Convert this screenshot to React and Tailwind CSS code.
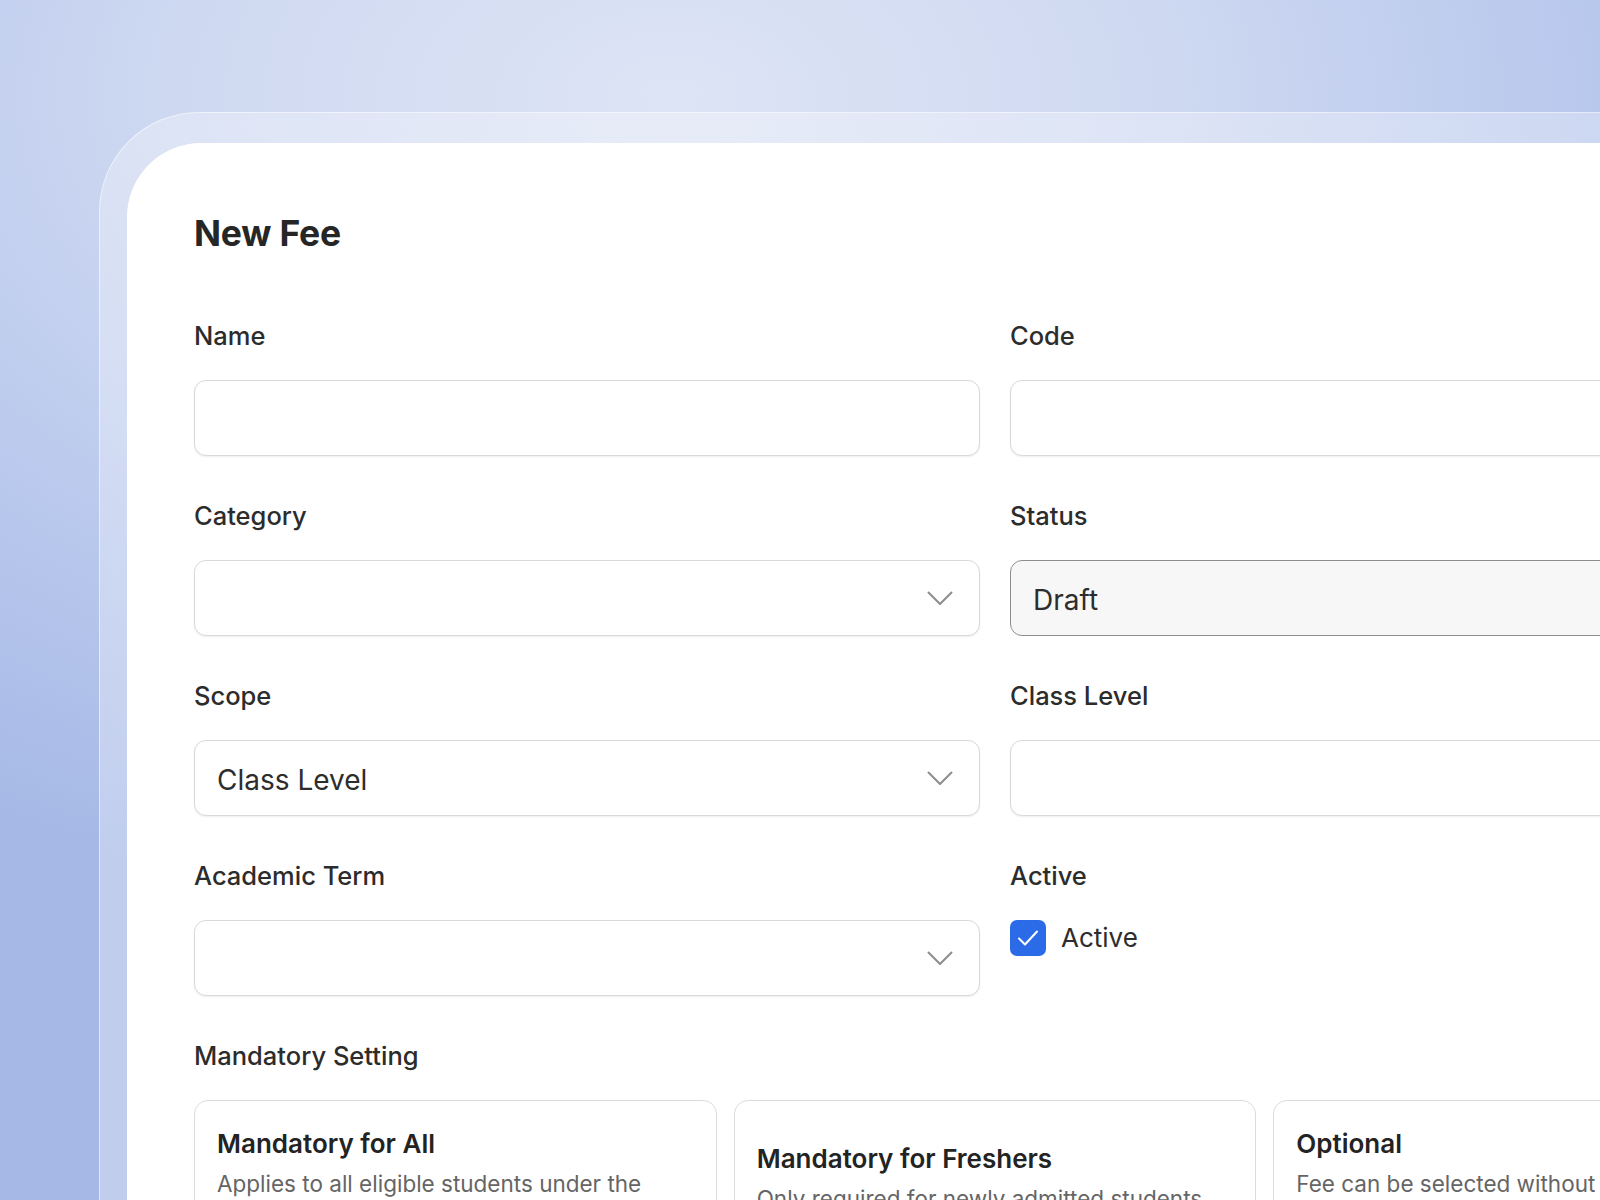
const ChevronDown = () => (
  <svg width="26" height="15" viewBox="0 0 26 15" fill="none" className="shrink-0">
    <path d="M1.5 1.5L13 13L24.5 1.5" stroke="#8d8d8d" strokeWidth="2" strokeLinecap="round" strokeLinejoin="round" />
  </svg>
);

const boxBase =
  "h-[76px] w-full rounded-xl border border-[#d9d9d9] bg-white px-[22px] text-[28px] text-[#2d2d2d] shadow-[0_1px_2px_rgba(0,0,0,0.07)] outline-none";

const Field = ({ label, children }) => (
  <div className="flex flex-col gap-7">
    <label className="text-[25.5px] leading-8 font-medium text-[#2c2c2c]">{label}</label>
    {children}
  </div>
);

const TextInput = ({ value = "" }) => <input type="text" defaultValue={value} className={`${boxBase} pt-1`} />;

const SelectBox = ({ value }) => (
  <button type="button" className={`${boxBase} flex items-center justify-between pr-[26px] text-left`}>
    <span className="pt-1">{value}</span>
    <ChevronDown />
  </button>
);

const options = [
  {
    title: "Mandatory for All",
    desc: "Applies to all eligible students under the selected scope.",
  },
  {
    title: "Mandatory for Freshers",
    desc: "Only required for newly admitted students",
  },
  {
    title: "Optional",
    desc: "Fee can be selected without being mandatory.",
  },
];

export default function App() {
  return (
    <div
      className="relative h-[1200px] w-[1600px] overflow-hidden bg-[#b2c3ec] bg-[radial-gradient(ellipse_85%_70%_at_42%_8%,#dde4f5_0%,#cfd9f1_35%,#bac9ed_65%,#a5b8e6_100%)]"
      style={{ fontFamily: "Inter, 'Noto Sans', sans-serif" }}
    >
      <div className="ml-[99px] mt-[112px] w-[1820px] rounded-tl-[100px] border-l border-t border-white/50 bg-white/30 pl-[27px] pt-[30px]">
        <div className="h-[1200px] rounded-tl-[74px] bg-white pl-[67px] pt-[69px]">
          <div className="w-[1602px]">
            <h1 className="text-[35.5px] leading-[44px] font-bold tracking-[-0.2px] text-[#262626]">New Fee</h1>

            <div className="mt-[64px] grid grid-cols-2 gap-x-[30px] gap-y-11">
              <Field label="Name">
                <TextInput />
              </Field>
              <Field label="Code">
                <TextInput />
              </Field>
              <Field label="Category">
                <SelectBox value="" />
              </Field>
              <Field label="Status">
                <input
                  type="text"
                  readOnly
                  defaultValue="Draft"
                  className="h-[76px] w-full rounded-xl border-[1.5px] border-[#8e8e8e] bg-[#f7f7f7] px-[22px] pt-1 text-[28px] text-[#2d2d2d] outline-none"
                />
              </Field>
              <Field label="Scope">
                <SelectBox value="Class Level" />
              </Field>
              <Field label="Class Level">
                <TextInput />
              </Field>
              <Field label="Academic Term">
                <SelectBox value="" />
              </Field>
              <Field label="Active">
                <label className="flex items-center gap-[15px]">
                  <span className="flex h-9 w-9 items-center justify-center rounded-[7px] bg-[#2b6be8]">
                    <svg width="28" height="28" viewBox="0 0 28 28" fill="none">
                      <path d="M5 14.5L11 20.5L23 7.5" stroke="white" strokeWidth="2" strokeLinecap="round" strokeLinejoin="round" />
                    </svg>
                  </span>
                  <span className="text-[26px] leading-9 text-[#2d2d2d]">Active</span>
                </label>
              </Field>
            </div>

            <div className="mt-11 flex flex-col gap-7">
              <p className="text-[25.5px] leading-8 font-medium text-[#2c2c2c]">Mandatory Setting</p>
              <div className="grid grid-cols-3 gap-[17px]">
                {options.map((o) => (
                  <div
                    key={o.title}
                    className="flex flex-col justify-center rounded-[14px] border border-[#dcdcdc] px-[22px] pt-[27px] pb-[23px]"
                  >
                    <h3 className="text-[26px] leading-8 font-semibold text-[#232323]">{o.title}</h3>
                    <p className="mt-[9px] text-[22.5px] leading-[30px] text-[#656565]">{o.desc}</p>
                  </div>
                ))}
              </div>
            </div>
          </div>
        </div>
      </div>
    </div>
  );
}
